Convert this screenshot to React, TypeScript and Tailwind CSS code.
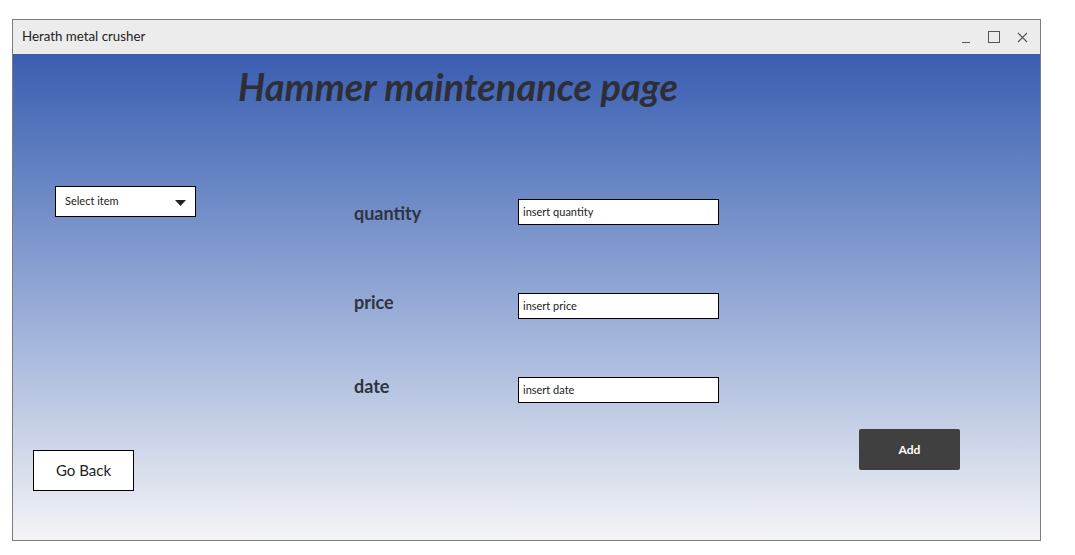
import React from "react";

const fields = [
  { label: "quantity", placeholder: "insert quantity", mt: "mt-[13px]", labelMt: "mt-[1px]" },
  { label: "price", placeholder: "insert price", mt: "mt-[66px]", labelMt: "mt-[-4px]" },
  { label: "date", placeholder: "insert date", mt: "mt-[58px]", labelMt: "mt-[-4px]" },
];

function Field({ label, placeholder, mt, labelMt }: (typeof fields)[number]) {
  return (
    <div className={`flex items-start ${mt}`}>
      <div className={`w-[164px] text-[18px] font-bold text-[#2f3440] ${labelMt}`}>{label}</div>
      <div className="flex h-[26px] w-[201px] items-center border border-black bg-white pl-[4px] text-[11px] text-[#222]">
        {placeholder}
      </div>
    </div>
  );
}

export default function App() {
  return (
    <div className="h-[555px] w-[1075px] bg-white pl-[12px] pt-[19px] font-['Lato',sans-serif]">
      <div className="flex h-[522px] w-[1029px] flex-col border border-[#7c7c7c]">
        {/* title bar */}
        <div className="flex h-[34px] items-center justify-between bg-[#ececec] pl-[9px] pr-[12px]">
          <span className="text-[13.3px] text-[#222]">Herath metal crusher</span>
          <div className="flex items-center gap-[17px] text-[#555]">
            <svg width="10" height="11" viewBox="0 0 10 11">
              <path d="M1 10.5h8" stroke="currentColor" strokeWidth="1" />
            </svg>
            <svg width="12" height="12" viewBox="0 0 12 12">
              <rect x="0.5" y="0.5" width="11" height="11" fill="none" stroke="currentColor" />
            </svg>
            <svg width="11" height="11" viewBox="0 0 11 11">
              <path d="M1 1l9 9M10 1l-9 9" stroke="currentColor" strokeWidth="1.1" />
            </svg>
          </div>
        </div>

        {/* content */}
        <div className="flex flex-1 flex-col bg-linear-to-b from-[#3a5db0] to-[#f4f4f5]">
          <h1 className="ml-[225px] mt-[10px] text-[38px] leading-[44px] font-bold italic text-[#2e2f36]">
            Hammer maintenance page
          </h1>

          <div className="mt-[78px] flex">
            <div className="ml-[42px] flex h-[31px] w-[141px] items-center justify-between border border-black bg-white pl-[9px] pr-[9px] text-[11px] text-[#222]">
              <span>Select item</span>
              <svg width="11" height="6" viewBox="0 0 11 6" className="mt-[3px]">
                <path d="M0 0h11L5.5 6z" fill="#222" />
              </svg>
            </div>

            <div className="ml-[158px] flex flex-col">
              {fields.map((f) => (
                <Field key={f.label} {...f} />
              ))}
            </div>
          </div>

          <div className="mt-[26px] flex items-start">
            <button className="ml-[20px] mt-[21px] h-[41px] w-[101px] border border-black bg-white text-[15px] text-[#222]">
              Go Back
            </button>
            <button className="ml-[725px] h-[41px] w-[101px] rounded-[2px] bg-[#404040] text-[12px] font-bold text-white">
              Add
            </button>
          </div>
        </div>
      </div>
    </div>
  );
}
